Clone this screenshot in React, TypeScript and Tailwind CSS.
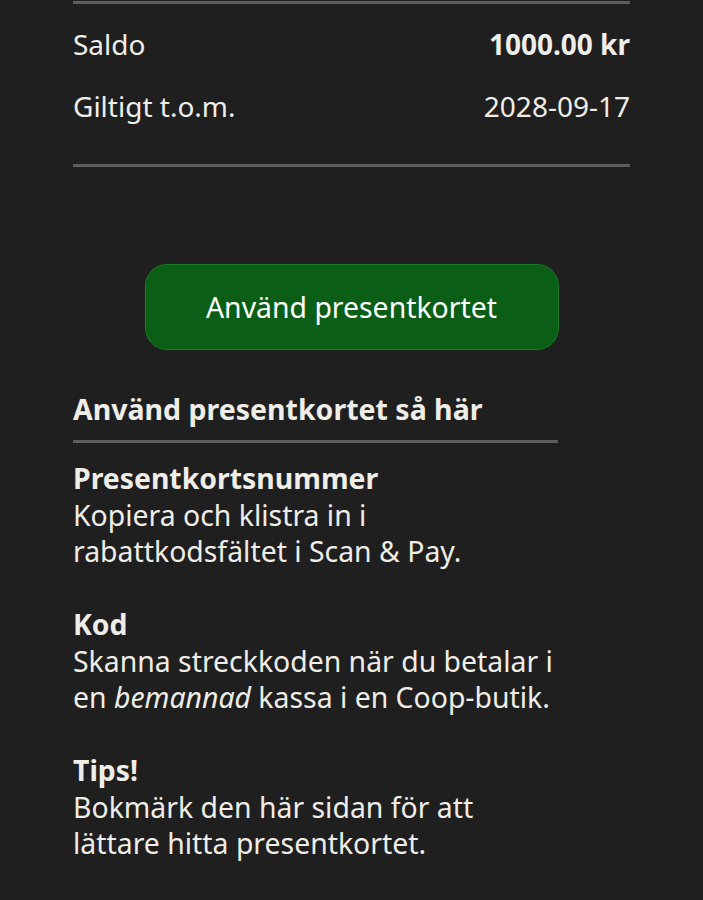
import React from "react";

export default function App() {
  return (
    <div
      className="min-h-[900px] w-full bg-[#1f1f1f] text-[#efede8] overflow-hidden"
      style={{ fontFamily: '"Noto Sans", "Open Sans", sans-serif' }}
    >
      <div className="pl-[73px] pr-[73px] pt-[1px]">
        <div className="h-[3px] bg-[#5c5c5c]" />
        <div className="flex items-center justify-between h-[62px] mt-[9px] text-[28px]">
          <span>Saldo</span>
          <span className="font-bold">1000.00 kr</span>
        </div>
        <div className="flex items-center justify-between h-[62px] text-[28px]">
          <span>Giltigt t.o.m.</span>
          <span>2028-09-17</span>
        </div>
        <div className="h-[3px] bg-[#5c5c5c] mt-[27px]" />
      </div>

      <div className="flex justify-center mt-[97px]">
        <button className="w-[414px] h-[86px] rounded-[22px] bg-[#0a5e16] border border-[#1d7a26] text-white text-[28.4px]">
          Använd presentkortet
        </button>
      </div>

      <div className="pl-[73px] w-[558px] mt-[40px]">
        <h2 className="text-[28.5px] font-bold leading-[38px]">Använd presentkortet så här</h2>
        <div className="h-[3px] bg-[#5c5c5c] mt-[12px]" />
        <div className="mt-[17px] text-[28.4px] leading-[36.5px]">
          <div className="font-bold">Presentkortsnummer</div>
          <p>Kopiera och klistra in i rabattkodsfältet i Scan &amp; Pay.</p>
          <div className="font-bold mt-[36.5px]">Kod</div>
          <p>
            Skanna streckkoden när du betalar i en <em>bemannad</em> kassa i en Coop-butik.
          </p>
          <div className="font-bold mt-[36.5px]">Tips!</div>
          <p>Bokmärk den här sidan för att lättare hitta presentkortet.</p>
        </div>
      </div>
    </div>
  );
}
